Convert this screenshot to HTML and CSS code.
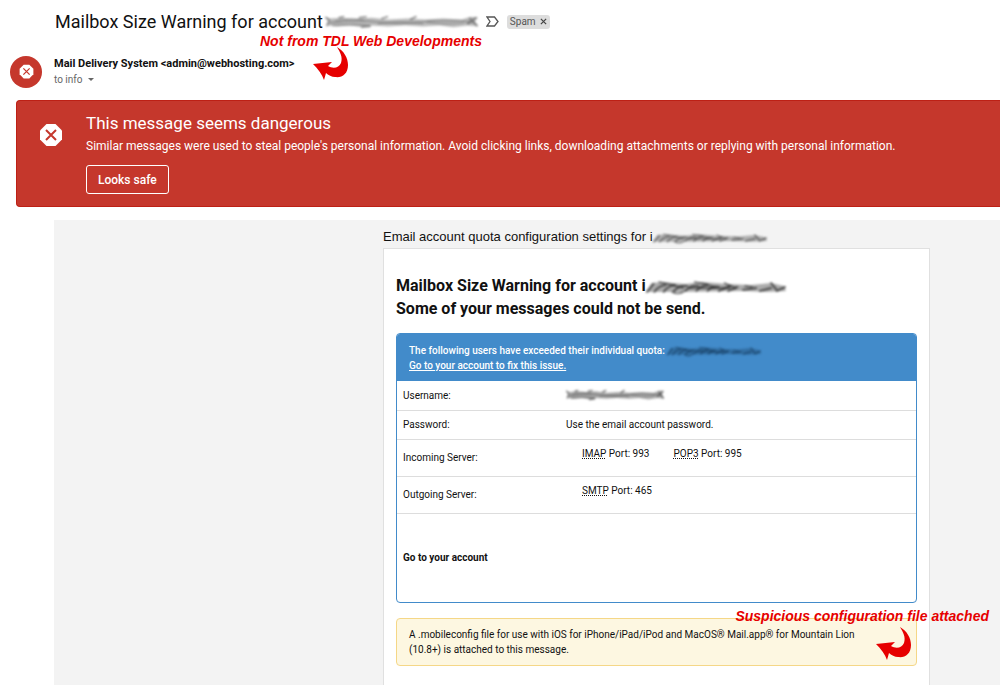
FILE: index.html
```
<!DOCTYPE html>
<html lang="en">
<head>
  <meta charset="UTF-8">
  <meta name="viewport" content="width=device-width, initial-scale=1.0">
  <title>Mailbox Size Warning</title>
  <link rel="stylesheet" href="styles.css">
</head>
<body>

<!-- Shared shapes -->
<svg class="shapes" aria-hidden="true">
  <symbol id="arrow" viewBox="0 0 35 34">
    <path fill="#e60000" d="M24 1C31 5 35 12 35 19C35 28 29 32 22 31C19 31 15 29 13 27L11 34C9 28 5 23 0 18L19 16L15 20C20 23 26 22 28 17C30 11 27 6 24 1Z"/>
  </symbol>
  <symbol id="smudge" viewBox="0 0 150 16" preserveAspectRatio="none">
    <path fill="currentColor" opacity=".4" d="M0 2L5 4L16 3L30 4L46 3L62 5L80 4L98 5L116 4L134 5L143 2L150 3L147 7L150 13L140 12L126 14L112 12L96 13L78 12L62 13L44 12L38 14L24 12L12 13L2 12L5 8Z"/>
    <g fill="none" stroke="currentColor" stroke-linecap="round">
      <path stroke-width="2" opacity=".4" d="M4 9Q30 5 52 8T94 8T146 8M8 12Q30 10 44 12"/>
      <path stroke-width="1" opacity=".5" d="M10 7Q24 3 38 6M52 10Q74 6 96 10M100 8Q118 12 136 9"/>
      <path stroke-width="2" opacity=".6" d="M1 3L4 6L2 12M14 3L18 2M34 3L40 2M56 4L61 2M84 5L89 2M36 14L44 13M142 4L149 12M140 10L148 3"/>
    </g>
  </symbol>
  <symbol id="smear" viewBox="0 0 150 16" preserveAspectRatio="none">
    <path fill="currentColor" opacity=".35" d="M6 4L18 3L42 5L60 3L88 5L112 6L134 4L148 7L150 12L130 13L104 12L40 13L0 13Z"/>
    <g fill="none" stroke="currentColor" stroke-linecap="round">
      <path stroke-width="2" opacity=".6" d="M1 13L8 5M9 13Q13 7 21 6M19 13Q23 7 31 6M30 12Q36 6 44 7M42 12Q48 6 56 7M54 12Q58 7 66 6M66 12Q70 7 78 8M78 12L90 7M88 12L98 8M104 11L118 9M122 12L134 9M134 4L140 11M140 12L149 8"/>
      <path stroke-width="1.500" opacity=".6" d="M14 3L24 5L40 9M52 3L64 5L76 9M28 13Q34 16 40 13M84 4L96 9M46 9H90M106 7L114 8"/>
    </g>
  </symbol>
  <symbol id="danger" viewBox="0 0 24 24">
    <path fill="#fff" d="M7.5 1h9L23 7.500v9L16.500 23h-9L1 16.500v-9z"/>
    <path fill="none" stroke="#c5372c" stroke-width="2" d="M7 7l10 10M17 7L7 17"/>
  </symbol>
</svg>

<header class="subject">
  <h1>Mailbox Size Warning for account</h1>
  <svg class="smudge smudge-subject"><use href="#smudge"/></svg>
  <svg class="important" viewBox="0 0 13 11"><path fill="none" stroke="#555" stroke-width="1.300" d="M1 1h7.500l3.500 4.500L8.500 10H1l3-4.500z"/></svg>
  <button class="label" type="button">Spam <svg viewBox="0 0 8 8"><path stroke="#444" stroke-width="1.400" d="M1 1l6 6M7 1L1 7"/></svg></button>
</header>

<section class="sender">
  <div class="avatar"><svg><use href="#danger"/></svg></div>
  <div>
    <div class="from">Mail Delivery System &lt;admin@webhosting.com&gt;</div>
    <button class="to" type="button">to info <span class="caret"></span></button>
  </div>
  <div class="note note-sender">Not from TDL Web Developments</div>
  <svg class="arrow arrow-sender"><use href="#arrow"/></svg>
</section>

<section class="banner">
  <svg class="banner-icon"><use href="#danger"/></svg>
  <div>
    <h2>This message seems dangerous</h2>
    <p>Similar messages were used to steal people's personal information. Avoid clicking links, downloading attachments or replying with personal information.</p>
    <button type="button">Looks safe</button>
  </div>
</section>

<main class="message">
  <div class="mail">
    <p class="intro">Email account quota configuration settings for i<svg class="smudge smudge-intro"><use href="#smear"/></svg></p>
    <div class="card">
      <h3>Mailbox Size Warning for account i<svg class="smudge smudge-title"><use href="#smear"/></svg><br>Some of your messages could not be send.</h3>

      <div class="quota">
        <div class="quota-head">
          The following users have exceeded their individual quota: <svg class="smudge smudge-quota"><use href="#smear"/></svg><br>
          <a href="#">Go to your account to fix this issue.</a>
        </div>
        <table>
          <tr><th scope="row">Username:</th><td><svg class="smudge smudge-user"><use href="#smudge"/></svg></td></tr>
          <tr><th scope="row">Password:</th><td>Use the email account password.</td></tr>
          <tr class="server"><th scope="row">Incoming Server:</th><td><ul><li><abbr>IMAP</abbr> Port: 993</li><li><abbr>POP3</abbr> Port: 995</li></ul></td></tr>
          <tr class="server"><th scope="row">Outgoing Server:</th><td><ul><li><abbr>SMTP</abbr> Port: 465</li></ul></td></tr>
          <tr class="account"><td colspan="2">Go to your account</td></tr>
        </table>
      </div>

      <div class="notice">
        A .mobileconfig file for use with iOS for iPhone/iPad/iPod and MacOS® Mail.app® for Mountain Lion (10.8+) is attached to this message.
        <div class="note note-file">Suspicious configuration file attached</div>
        <svg class="arrow arrow-file"><use href="#arrow"/></svg>
      </div>
    </div>
  </div>
</main>

</body>
</html>
```
FILE: styles.css
```
* {
  box-sizing: border-box;
}
body {
  margin: 0;
  min-height: 100vh;
  display: flex;
  flex-direction: column;
  overflow-x: hidden;
  background: #fff;
  color: #111;
  font-family: Roboto, Arial, sans-serif;
  font-size: 11px;
}
h1, h2, h3, p, ul {
  margin: 0;
}
button {
  font-family: inherit;
  cursor: pointer;
}
.shapes {
  position: absolute;
  width: 0;
  height: 0;
}

/* Blurred out addresses */
.smudge {
  color: #333;
  filter: blur(1px);
  vertical-align: middle;
}
.smudge-subject {
  width: 153px;
  height: 14px;
  color: #555;
}
.smudge-intro {
  width: 114px;
  height: 12px;
}
.smudge-title {
  width: 140px;
  height: 16px;
  color: #111;
}
.smudge-quota {
  width: 94px;
  height: 12px;
  color: #14385c;
}
.smudge-user {
  display: block;
  width: 98px;
  height: 12px;
}

/* Subject line */
.subject {
  display: flex;
  align-items: center;
  height: 43px;
  padding-left: 55px;
}
.subject h1 {
  margin-right: 2px;
  font-size: 18px;
  font-weight: 400;
}
.important {
  width: 13px;
  height: 11px;
  margin: 0 8px;
}
.label {
  display: flex;
  align-items: center;
  gap: 4px;
  height: 14px;
  padding: 0 3px;
  border: 0;
  border-radius: 3px;
  background: #ddd;
  color: #555;
  font-size: 10px;
}
.label svg {
  width: 7px;
  height: 7px;
}

/* Sender */
.sender {
  position: relative;
  display: flex;
  align-items: center;
  gap: 12px;
  height: 57px;
  padding-left: 10px;
}
.avatar {
  display: flex;
  align-items: center;
  justify-content: center;
  width: 32px;
  height: 32px;
  border-radius: 50%;
  background: #c5372c;
}
.avatar svg {
  width: 15px;
  height: 15px;
}
.from {
  font-weight: 700;
  line-height: 16px;
}
.to {
  display: flex;
  align-items: center;
  gap: 5px;
  padding: 0;
  border: 0;
  background: none;
  color: #666;
  font-size: 10px;
  line-height: 16px;
}
.caret {
  border: 3px solid transparent;
  border-top-color: #666;
  border-bottom: 0;
}

/* Red annotations on top of the mail */
.note {
  position: absolute;
  color: #e60000;
  font: italic bold 14px/18px "Liberation Sans", Arial, sans-serif;
  white-space: nowrap;
}
.arrow {
  position: absolute;
  width: 35px;
  height: 34px;
}
.note-sender {
  top: -11px;
  left: 260px;
}
.arrow-sender {
  top: 3px;
  left: 313px;
}
.note-file {
  top: -12px;
  right: -73px;
}
.arrow-file {
  top: 7px;
  right: 5px;
}

/* Danger banner */
.banner {
  display: flex;
  gap: 23px;
  margin-left: 16px;
  padding: 13px 24px 12px 22px;
  border: 1px solid #bd2015;
  border-right: 0;
  border-radius: 4px 0 0 4px;
  background: #c5372c;
  color: #fff;
}
.banner-icon {
  flex: none;
  width: 24px;
  height: 24px;
  margin-top: 9px;
}
.banner h2 {
  font-size: 17px;
  font-weight: 400;
  line-height: 18px;
}
.banner p {
  margin: 6px 0 11px;
  font-size: 12px;
  line-height: 16px;
}
.banner button {
  display: block;
  height: 29px;
  padding: 0 11px;
  border: 1px solid #fff;
  border-radius: 3px;
  background: transparent;
  color: #fff;
  font-size: 12px;
  font-weight: 500;
}

/* Mail body */
.message {
  flex: 1;
  display: flex;
  margin: 13px 0 0 54px;
  padding-left: 329px;
  background: #f3f3f3;
}
.mail {
  display: flex;
  flex-direction: column;
  width: 100%;
  max-width: 547px;
}
.intro {
  padding: 9px 0 3px;
  font: 13px/16px "Liberation Sans", Arial, sans-serif;
  white-space: nowrap;
}
.card {
  flex: 1;
  padding: 25px 12px 18px;
  border: 1px solid #e0e0e0;
  border-bottom: 0;
  background: #fff;
  font-size: 10px;
}
.card h3 {
  margin-bottom: 13px;
  font-size: 16px;
  line-height: 23px;
}
.quota {
  border: 1px solid #428bca;
  border-radius: 4px;
  overflow: hidden;
}
.quota-head {
  padding: 9px 12px 8px;
  background: #428bca;
  color: #fff;
  font-weight: 500;
  line-height: 15px;
}
.quota-head a {
  color: #fff;
}
.quota table {
  width: 100%;
  border-collapse: collapse;
}
.quota th, .quota td {
  height: 29px;
  padding: 0 6px;
  border-bottom: 1px solid #ddd;
  text-align: left;
  font-weight: 400;
}
.quota th {
  width: 163px;
}
.quota .server th, .quota .server td {
  height: 37px;
}
.quota .account td {
  height: 89px;
  border-bottom: 0;
  font-weight: 700;
}
.quota ul {
  display: flex;
  gap: 24px;
  padding: 0 0 8px 16px;
  list-style: none;
}
abbr {
  text-decoration: underline dotted;
}
.notice {
  position: relative;
  margin-top: 15px;
  padding: 8px 40px 8px 12px;
  border: 1px solid #f5d787;
  border-radius: 4px;
  background: #fdf7e1;
  line-height: 15px;
}
```
